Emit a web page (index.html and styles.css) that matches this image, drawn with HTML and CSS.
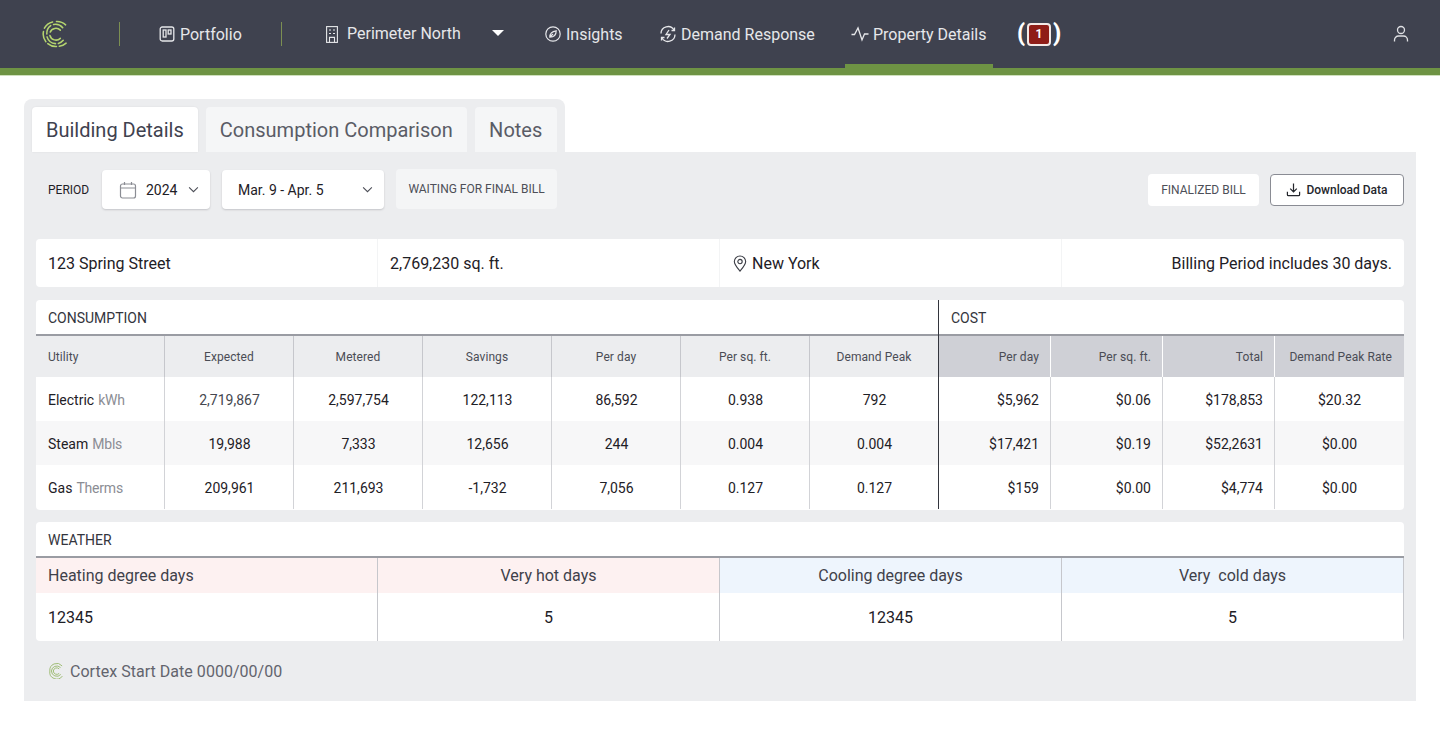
FILE: index.html
```html
<!DOCTYPE html>
<html lang="en">
<head>
<meta charset="utf-8">
<title>Property Details</title>
<link rel="stylesheet" href="styles.css">
</head>
<body>
<header class="topbar">
  <nav class="nav">
    <div class="logo-wrap">
      <svg class="logo" viewBox="0 0 28 30" fill="none" stroke="#b5d56f" stroke-width="1.6" stroke-linecap="round">
        <path d="M24.5 5.5A13 13 0 0 0 15 2" />
        <path d="M11 2.5A13 13 0 0 0 2.5 9" />
        <path d="M1.5 12.5A13 13 0 0 0 4 23" />
        <path d="M6 25A13 13 0 0 0 15 28" />
        <path d="M18 27.8A13 13 0 0 0 25 24.5" />
        <path d="M21.5 8.5A10 10 0 0 0 12 5.2" />
        <path d="M9 6.2A10 10 0 0 0 5 15" />
        <path d="M5.2 18A10 10 0 0 0 14 25" />
        <path d="M17 24.8A10 10 0 0 0 22 21.5" />
        <path d="M19 11A6.5 6.5 0 0 0 8.5 13" />
        <path d="M8.2 16.5A6.5 6.5 0 0 0 19 19.5" />
      </svg>
    </div>
    <a class="nav-item portfolio">
      <svg class="ico" viewBox="0 0 16 16" fill="none" stroke="#e6e7ea" stroke-width="1.3"><rect x="1.2" y="1" width="13.6" height="14" rx="2"/><rect x="4.2" y="4" width="2.8" height="7"/><rect x="9.2" y="4" width="2.8" height="4"/></svg>
      <span>Portfolio</span>
    </a>
    <a class="nav-item building">
      <svg class="ico-building" viewBox="0 0 12 17" fill="none" stroke="#e6e7ea" stroke-width="1.1"><rect x="0.6" y="0.6" width="10.8" height="15.8"/><path d="M3 4h2M7 4h2M3 7.5h2M7 7.5h2M3.5 16.4v-5h5v5"/></svg>
      <span>Perimeter North</span>
      <span class="caret"></span>
    </a>
    <a class="nav-item insights">
      <svg class="ico" viewBox="0 0 16 16" fill="none" stroke="#e6e7ea" stroke-width="1.2"><circle cx="8" cy="8" r="7.2"/><path d="M4.8 11.2c0-3.2 2.2-5.8 6.4-6.4 0 3.700-2.200 6.400-6.400 6.400zM4.800 11.200L8 8"/></svg>
      <span>Insights</span>
    </a>
    <a class="nav-item demand">
      <svg class="ico-wide" viewBox="0 0 18 18" fill="none" stroke="#e6e7ea" stroke-width="1.3"><path d="M2 8.500A7 7 0 0 1 15 5M16 9.500A7 7 0 0 1 3 13"/><path d="M15.500 2.500v3H12.500M2.500 15.500v-3H5.500"/><path d="M10 5L7 9.500h4L8 13.500"/></svg>
      <span>Demand Response</span>
    </a>
    <a class="nav-item property active">
      <svg class="ico-wide" viewBox="0 0 18 16" fill="none" stroke="#e6e7ea" stroke-width="1.3"><path d="M0.500 8.500h3L7 2l4 12 2.500-6H17.500"/></svg>
      <span>Property Details</span>
    </a>
    <div class="alert"><span class="paren">(</span><span class="alert-box">1</span><span class="paren">)</span></div>
    <svg class="user" viewBox="0 0 16 18" fill="none" stroke="#dfe0e4" stroke-width="1.3"><circle cx="8" cy="5" r="3.5"/><path d="M1.500 16.500V15a4 4 0 0 1 4-4h5a4 4 0 0 1 4 4v1.500"/></svg>
  </nav>
</header>

<main class="page">
  <section class="panel">
    <div class="tabs">
      <button class="tab tab-active">Building Details</button>
      <button class="tab">Consumption Comparison</button>
      <button class="tab">Notes</button>
    </div>
    <div class="panel-body">
      <div class="filters">
        <span class="filter-label">PERIOD</span>
        <div class="select year">
          <svg class="cal" viewBox="0 0 18 18" fill="none" stroke="#8b8d94" stroke-width="1.2"><rect x="1.500" y="3" width="15" height="14" rx="2"/><path d="M1.500 7h15M5.500 1v3M12.500 1v3"/></svg>
          <span>2024</span>
          <svg class="chev" viewBox="0 0 12 8" fill="none" stroke="#4a4c55" stroke-width="1.2"><path d="M1 1.500l5 5 5-5"/></svg>
        </div>
        <div class="select range">
          <span>Mar. 9 - Apr. 5</span>
          <svg class="chev" viewBox="0 0 12 8" fill="none" stroke="#4a4c55" stroke-width="1.2"><path d="M1 1.500l5 5 5-5"/></svg>
        </div>
        <span class="status waiting">WAITING FOR FINAL BILL</span>
        <div class="filters-end">
          <span class="status final">FINALIZED BILL</span>
          <button class="download">
            <svg viewBox="0 0 16 16" fill="none" stroke="#24262c" stroke-width="1.3"><path d="M8 1.500V10.500M4.500 7L8 10.500 11.500 7M1.500 10.500v3a1 1 0 0 0 1 1h11a1 1 0 0 0 1-1v-3"/></svg>
            Download Data
          </button>
        </div>
      </div>

      <div class="card info">
        <div class="info-cell">123 Spring Street</div>
        <div class="info-cell">2,769,230 sq. ft.</div>
        <div class="info-cell">
          <svg class="pin" viewBox="0 0 14 18" fill="none" stroke="#3c3e46" stroke-width="1.2"><path d="M7 17C4 13.500 1 10.500 1 7a6 6 0 0 1 12 0c0 3.500-3 6.500-6 10z"/><circle cx="7" cy="7" r="2.300"/></svg>
          New York
        </div>
        <div class="info-cell">Billing Period includes 30 days.</div>
      </div>

      <div class="card data">
        <div class="section-title span7">CONSUMPTION</div>
        <div class="section-title span4 cost-start">COST</div>

        <div class="th left">Utility</div>
        <div class="th">Expected</div>
        <div class="th">Metered</div>
        <div class="th">Savings</div>
        <div class="th">Per day</div>
        <div class="th">Per sq. ft.</div>
        <div class="th">Demand Peak</div>
        <div class="th cost cost-start r">Per day</div>
        <div class="th cost r">Per sq. ft.</div>
        <div class="th cost r">Total</div>
        <div class="th cost last r">Demand Peak Rate</div>

        <div class="td left">Electric <i>kWh</i></div>
        <div class="td muted">2,719,867</div>
        <div class="td">2,597,754</div>
        <div class="td">122,113</div>
        <div class="td">86,592</div>
        <div class="td">0.938</div>
        <div class="td">792</div>
        <div class="td cost-start r">$5,962</div>
        <div class="td r">$0.06</div>
        <div class="td r">$178,853</div>
        <div class="td last">$20.32</div>

        <div class="td left alt">Steam <i>Mbls</i></div>
        <div class="td alt">19,988</div>
        <div class="td alt">7,333</div>
        <div class="td alt">12,656</div>
        <div class="td alt">244</div>
        <div class="td alt">0.004</div>
        <div class="td alt">0.004</div>
        <div class="td alt cost-start r">$17,421</div>
        <div class="td alt r">$0.19</div>
        <div class="td alt r">$52,2631</div>
        <div class="td alt last">$0.00</div>

        <div class="td left">Gas <i>Therms</i></div>
        <div class="td">209,961</div>
        <div class="td">211,693</div>
        <div class="td">-1,732</div>
        <div class="td">7,056</div>
        <div class="td">0.127</div>
        <div class="td">0.127</div>
        <div class="td cost-start r">$159</div>
        <div class="td r">$0.00</div>
        <div class="td r">$4,774</div>
        <div class="td last">$0.00</div>
      </div>

      <div class="card weather">
        <div class="section-title span-all">WEATHER</div>
        <div class="wh hot left-text">Heating degree days</div>
        <div class="wh hot">Very hot days</div>
        <div class="wh cold">Cooling degree days</div>
        <div class="wh cold">Very &nbsp;cold days</div>
        <div class="wv left-text">12345</div>
        <div class="wv">5</div>
        <div class="wv">12345</div>
        <div class="wv">5</div>
      </div>

      <div class="start-date">
        <svg class="mini-logo" viewBox="0 0 28 30" fill="none" stroke="#9dbb72" stroke-width="1.8">
          <path d="M24.500 5.500A13 13 0 0 0 1.500 15 13 13 0 0 0 25 24.500"/>
          <path d="M21.500 8.500A10 10 0 0 0 4.500 15 10 10 0 0 0 22 21.500"/>
          <path d="M19 11A6.500 6.500 0 0 0 8 15 6.500 6.500 0 0 0 19 19.500"/>
        </svg>
        Cortex Start Date 0000/00/00
      </div>
    </div>
  </section>
</main>
</body>
</html>
```
FILE: styles.css
```css
* { box-sizing: border-box; }
html, body { margin: 0; padding: 0; background: #fff; }
body { font-family: Roboto, "Liberation Sans", sans-serif; color: #1e2026; height: 736px; overflow: hidden; }

.topbar { height: 75px; background: #3f424f; border-bottom: 7px solid #6e9344; box-shadow: 0 1px 0 #cfe0bd; }
.nav { display: flex; align-items: stretch; height: 68px; position: relative; }
.logo-wrap { width: 120px; display: flex; align-items: center; padding-left: 42px; position: relative; }
.logo { width: 27px; height: 30px; }
.nav-item { display: flex; align-items: center; gap: 5px; color: #e6e7ea; font-size: 16px; white-space: nowrap; position: relative; }
.ico { width: 16px; height: 16px; flex: none; }
.ico-building { width: 12px; height: 17px; flex: none; }
.ico-wide { width: 18px; height: 18px; flex: none; }
.logo-wrap::after, .portfolio::after { content: ""; position: absolute; right: 0; top: 22px; height: 24px; width: 1px; background: #7c8f52; }
.portfolio { width: 162px; padding-left: 39px; }
.building { padding-left: 44px; width: 263px; gap: 9px; }
.building span:first-of-type { position: relative; top: -1px; }
.caret { width: 0; height: 0; border-left: 6.5px solid transparent; border-right: 6.5px solid transparent; border-top: 6.5px solid #fff; margin-left: 22px; position: relative; top: -1px; }
.insights { width: 114px; }
.demand { width: 186px; gap: 4px; }
.property { width: 148px; padding-left: 6px; gap: 4px; }
.property.active::after { content: ""; position: absolute; left: 0; right: 0; bottom: 0; height: 4px; background: #6e9344; }
.alert { display: flex; align-items: center; margin-left: 24px; gap: 2px; color: #fff; }
.paren { width: 8px; text-align: center; font-size: 23px; font-weight: 900; line-height: 1; position: relative; top: -1px; }
.alert-box { width: 24px; height: 23px; border: 2px solid #f3e9e6; border-radius: 4px; background: #8f1d17; color: #fff; font-size: 12px; font-weight: 700; display: flex; align-items: center; justify-content: center; }
.user { position: absolute; right: 31px; top: 25px; width: 16px; height: 18px; }

.page { padding: 24px 24px 0; }
.tabs { display: inline-flex; gap: 8px; padding: 8px 8px 0; background: #ecedef; border-radius: 8px 8px 0 0; height: 53px; vertical-align: top; }
.tab { font: 400 20px Roboto, sans-serif; color: #5a5c66; background: #f5f6f7; border: 0; border-radius: 4px 4px 0 0; padding: 0 14px; height: 45px; }
.tab:last-child { width: 82px; }
.tab-active { background: #fff; color: #3f424f; box-shadow: 0 0 2px rgba(0,0,0,.08); }
.panel-body { background: #ecedef; padding: 17px 12px 0; height: 549px; }

.filters { display: flex; align-items: center; height: 41px; margin-bottom: 29px; padding-left: 12px; }
.filter-label { font-size: 12px; width: 54px; color: #1e2026; }
.select { background: #fff; border-radius: 4px; height: 39px; display: flex; align-items: center; font-size: 14px; box-shadow: 0 1px 2px rgba(40,42,50,.2); margin-right: 12px; }
.year { width: 108px; padding-left: 17px; }
.cal { width: 18px; height: 18px; margin-right: 9px; }
.chev { width: 11px; height: 7px; margin-left: auto; margin-right: 11px; }
.range { width: 162px; padding-left: 16px; }
.status { font-size: 12px; color: #4d4f58; border-radius: 4px; display: flex; align-items: center; justify-content: center; white-space: nowrap; }
.waiting { width: 161px; height: 40px; background: #f4f5f6; align-self: flex-start; }
.filters-end { margin-left: auto; display: flex; gap: 11px; align-items: center; }
.final { width: 111px; height: 32px; background: #fff; }
.download { width: 134px; height: 32px; background: #fff; border: 1px solid #8a8c94; border-radius: 4px; font: 500 12px Roboto, sans-serif; color: #24262c; display: flex; align-items: center; justify-content: center; gap: 5px; padding: 0; }
.download svg { width: 15px; height: 15px; }

.card { background: #fff; border-radius: 4px; }
.info { display: grid; grid-template-columns: repeat(4, 342px); height: 48px; font-size: 16px; margin-bottom: 13px; }
.info-cell { display: flex; align-items: center; padding: 0 12px; color: #1e2026; border-right: 1px solid #f3f4f5; }
.info-cell:last-child { border-right: 0; justify-content: flex-end; }
.pin { width: 14px; height: 17px; margin: 0 5px 0 1px; }

.data { display: grid; grid-template-columns: repeat(7, 129px) repeat(3, 112px) 129px; grid-template-rows: 36px 41px 44px 44px 44px; height: 210px; padding-bottom: 1px; margin-bottom: 12px; overflow: hidden; }
.section-title { font-size: 14px; padding: 2px 0 0 12px; display: flex; align-items: center; border-bottom: 2px solid #9a9ca3; color: #33353d; }
.span7 { grid-column: span 7; }
.span4 { grid-column: span 4; }
.span-all { grid-column: 1 / -1; height: 36px; }
.th { font-size: 12px; letter-spacing: .08px; color: #4a4c55; background: #ecedef; display: flex; align-items: center; justify-content: center; border-right: 1px solid #c6c7cc; }
.th.cost { background: #cfd0d6; border-right: 1px solid #fff; }
.th.last, .td.last { border-right: 0; }
.td { font-size: 14px; color: #1e2026; display: flex; align-items: center; justify-content: center; padding: 1px 0 0 1px; border-right: 1px solid #d2d3d7; }
.td.last { padding-left: 0; }
.td.alt { background: #f7f7f8; }
.td.muted { color: #45474f; }
.th.left, .td.left { justify-content: flex-start; padding-left: 12px; }
.td i { font-style: normal; color: #8b8d94; margin-left: 4px; letter-spacing: -.2px; }
.th.r, .td.r { justify-content: flex-end; padding-right: 11px; }
.th.last.r { padding-right: 12px; }
.cost-start { box-shadow: -1px 0 0 #33353d; }

.weather { display: grid; grid-template-columns: repeat(4, 342px); grid-template-rows: 36px 35px 48px; height: 119px; overflow: hidden; }
.wh { font-size: 16px; color: #3f414a; display: flex; align-items: center; justify-content: center; border-right: 1px solid #c6c7cc; }
.hot { background: #fdf1f1; }
.cold { background: #eef5fd; }
.wv { font-size: 16px; display: flex; align-items: center; justify-content: center; border-right: 1px solid #c6c7cc; }
.wh.left-text, .wv.left-text { justify-content: flex-start; padding-left: 12px; }

.start-date { display: flex; align-items: center; margin-top: 18px; height: 24px; padding-left: 13px; font-size: 16px; letter-spacing: .03px; color: #62646d; }
.mini-logo { width: 15px; height: 16px; margin-right: 6px; }
```
